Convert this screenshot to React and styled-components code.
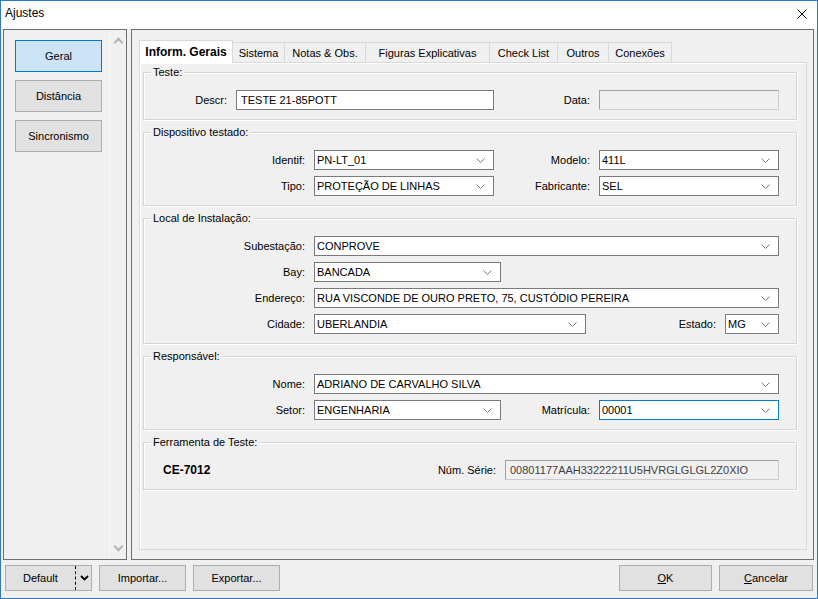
import styled, { createGlobalStyle } from 'styled-components'

const Global = createGlobalStyle`
  html, body { margin: 0; padding: 0; background: #ffffff; }
  body { font-family: "Liberation Sans", Arial, sans-serif; font-size: 11px; color: #000; }
  * { box-sizing: border-box; }
`;

export default function App(){
    return (
    <>
    <Global />
    <Janela>
        <BarraTitulo>
            <Titulo>Ajustes</Titulo>
            <Fechar>
                <svg width="10" height="10" viewBox="0 0 10 10">
                    <path d="M0.5 0.5 L9.5 9.5 M9.5 0.5 L0.5 9.5" stroke="#000" strokeWidth="1" />
                </svg>
            </Fechar>
        </BarraTitulo>
        <Corpo>
            <Conteudo>
                <PainelEsquerdo>
                    <ListaBotoes>
                        <BotaoLateral $ativo>Geral</BotaoLateral>
                        <BotaoLateral>Distância</BotaoLateral>
                        <BotaoLateral>Sincronismo</BotaoLateral>
                    </ListaBotoes>
                    <Rolagem>
                        <Seta $cima />
                        <Seta />
                    </Rolagem>
                </PainelEsquerdo>
                <PainelDireito>
                    <Abas>
                        <Aba $ativa $largura={94}>Inform. Gerais</Aba>
                        <Aba $largura={53}>Sistema</Aba>
                        <Aba $largura={82}>Notas &amp; Obs.</Aba>
                        <Aba $largura={125}>Figuras Explicativas</Aba>
                        <Aba $largura={69}>Check List</Aba>
                        <Aba $largura={52}>Outros</Aba>
                        <Aba $largura={64}>Conexões</Aba>
                    </Abas>
                    <Pagina>
                        <Grupo>
                            <Legenda>Teste:</Legenda>
                            <Linha>
                                <Rotulo $largura={92}>Descr:</Rotulo>
                                <Campo $largura={258}>TESTE 21-85POTT</Campo>
                                <Rotulo $largura={105}>Data:</Rotulo>
                                <Campo $largura={180} $desabilitado></Campo>
                            </Linha>
                        </Grupo>
                        <Grupo>
                            <Legenda>Dispositivo testado:</Legenda>
                            <Linha>
                                <Rotulo $largura={170}>Identif:</Rotulo>
                                <Combo largura={180} valor="PN-LT_01" />
                                <Rotulo $largura={105}>Modelo:</Rotulo>
                                <Combo largura={180} valor="411L" />
                            </Linha>
                            <Linha>
                                <Rotulo $largura={170}>Tipo:</Rotulo>
                                <Combo largura={180} valor="PROTEÇÃO DE LINHAS" />
                                <Rotulo $largura={105}>Fabricante:</Rotulo>
                                <Combo largura={180} valor="SEL" />
                            </Linha>
                        </Grupo>
                        <Grupo>
                            <Legenda>Local de Instalação:</Legenda>
                            <Linha>
                                <Rotulo $largura={170}>Subestação:</Rotulo>
                                <Combo largura={465} valor="CONPROVE" />
                            </Linha>
                            <Linha>
                                <Rotulo $largura={170}>Bay:</Rotulo>
                                <Combo largura={187} valor="BANCADA" />
                            </Linha>
                            <Linha>
                                <Rotulo $largura={170}>Endereço:</Rotulo>
                                <Combo largura={465} valor="RUA VISCONDE DE OURO PRETO, 75, CUSTÓDIO PEREIRA" />
                            </Linha>
                            <Linha>
                                <Rotulo $largura={170}>Cidade:</Rotulo>
                                <Combo largura={272} valor="UBERLANDIA" />
                                <Rotulo $largura={139}>Estado:</Rotulo>
                                <Combo largura={54} valor="MG" />
                            </Linha>
                        </Grupo>
                        <Grupo>
                            <Legenda>Responsável:</Legenda>
                            <Linha>
                                <Rotulo $largura={170}>Nome:</Rotulo>
                                <Combo largura={465} valor="ADRIANO DE CARVALHO SILVA" />
                            </Linha>
                            <Linha>
                                <Rotulo $largura={170}>Setor:</Rotulo>
                                <Combo largura={187} valor="ENGENHARIA" />
                                <Rotulo $largura={98}>Matrícula:</Rotulo>
                                <Combo largura={180} valor="00001" foco />
                            </Linha>
                        </Grupo>
                        <Grupo>
                            <Legenda>Ferramenta de Teste:</Legenda>
                            <Linha>
                                <Modelo>CE-7012</Modelo>
                                <Rotulo $largura={122}>Núm. Série:</Rotulo>
                                <Campo $largura={274} $desabilitado>00801177AAH33222211U5HVRGLGLGL2Z0XIO</Campo>
                            </Linha>
                        </Grupo>
                    </Pagina>
                </PainelDireito>
            </Conteudo>
            <Rodape>
                <Grupinho>
                    <Dividido>
                        <span>Default</span>
                        <Divisor />
                        <svg width="9" height="6" viewBox="0 0 9 6">
                            <path d="M1 1 L4.5 4.5 L8 1" stroke="#000" strokeWidth="1.8" fill="none" />
                        </svg>
                    </Dividido>
                    <Botao>Importar...</Botao>
                    <Botao>Exportar...</Botao>
                </Grupinho>
                <Grupinho>
                    <Botao $largura={93}><u>O</u>K</Botao>
                    <Botao $largura={94}><u>C</u>ancelar</Botao>
                </Grupinho>
            </Rodape>
        </Corpo>
    </Janela>
    </>
    )
}

function Combo({ largura, valor, foco }){
    return (
        <CaixaCombo $largura={largura} $foco={foco}>
            <span>{valor}</span>
            <svg width="9" height="5" viewBox="0 0 9 5">
                <path d="M0.5 0.5 L4.5 4.5 L8.5 0.5" stroke="#7a7a7a" strokeWidth="1" fill="none" />
            </svg>
        </CaixaCombo>
    )
}

const Janela = styled.div`
    width: 818px;
    height: 599px;
    border: 1px solid #2a7ad0;
    display: flex;
    flex-direction: column;
    background: #f0f0f0;
`;

const BarraTitulo = styled.div`
    height: 28px;
    background: #ffffff;
    display: flex;
    align-items: center;
    justify-content: space-between;
    padding: 0 10px 4px 4px;
`;

const Titulo = styled.div`
    font-size: 12px;
`;

const Fechar = styled.div`
    display: flex;
    padding-top: 2px;
`;

const Corpo = styled.div`
    flex: 1;
    display: flex;
    flex-direction: column;
`;

const Conteudo = styled.div`
    display: flex;
    gap: 4px;
    padding-left: 2px;
    height: 531px;
`;

const PainelEsquerdo = styled.div`
    width: 124px;
    border: 1px solid #6e6e6e;
    display: flex;
`;

const ListaBotoes = styled.div`
    flex: 1;
    display: flex;
    flex-direction: column;
    gap: 8px;
    padding: 10px 0 0 11px;
`;

const BotaoLateral = styled.div`
    width: 87px;
    height: 32px;
    display: flex;
    align-items: center;
    justify-content: center;
    font-size: 11px;
    background: ${p => p.$ativo ? '#cce4f7' : '#e1e1e1'};
    border: 1px solid ${p => p.$ativo ? '#0078d7' : '#adadad'};
`;

const Rolagem = styled.div`
    width: 17px;
    display: flex;
    flex-direction: column;
    justify-content: space-between;
    align-items: center;
    padding: 7px 0 7px;
    border-left: 1px solid #f7f7f7;
`;

const Seta = styled.div`
    width: 7px;
    height: 7px;
    border-left: 2px solid #b4b4b4;
    border-top: 2px solid #b4b4b4;
    transform: ${p => p.$cima ? 'translateY(2px) rotate(45deg)' : 'translateY(-2px) rotate(225deg)'};
`;

const PainelDireito = styled.div`
    width: 683px;
    border: 1px solid #6e6e6e;
    padding: 10px 6px 9px 7px;
    display: flex;
    flex-direction: column;
`;

const Abas = styled.div`
    display: flex;
    align-items: flex-end;
    height: 22px;
    position: relative;
    z-index: 1;
`;

const Aba = styled.div`
    width: ${p => p.$largura}px;
    height: ${p => p.$ativa ? 23 : 20}px;
    margin-bottom: ${p => p.$ativa ? -1 : 0}px;
    margin-left: -1px;
    display: flex;
    align-items: center;
    justify-content: center;
    padding-top: ${p => p.$ativa ? 0 : 1}px;
    border: 1px solid #d9d9d9;
    border-bottom: none;
    background: ${p => p.$ativa ? '#ffffff' : '#f0f0f0'};
    font-size: ${p => p.$ativa ? 12 : 11}px;
    font-weight: ${p => p.$ativa ? 700 : 400};
    &:first-child { margin-left: 0; }
`;

const Pagina = styled.div`
    flex: 1;
    border: 1px solid #d9d9d9;
    box-shadow: inset 1px 1px 0 #ffffff;
    padding: 9px 9px 0 3px;
    display: flex;
    flex-direction: column;
    gap: 12px;
`;

const Grupo = styled.div`
    position: relative;
    border: 1px solid #d5d5d5;
    box-shadow: inset 1px 1px 0 #ffffff, 1px 1px 0 #ffffff;
    padding: 17px 0 9px 0;
    display: flex;
    flex-direction: column;
    gap: 6px;
`;

const Legenda = styled.div`
    position: absolute;
    top: -7px;
    left: 7px;
    padding: 0 2px;
    line-height: 13px;
    background: #f0f0f0;
`;

const Linha = styled.div`
    display: flex;
    align-items: center;
    height: 20px;
`;

const Rotulo = styled.div`
    width: ${p => p.$largura}px;
    text-align: right;
    padding-right: 9px;
    white-space: nowrap;
`;

const Campo = styled.div`
    width: ${p => p.$largura}px;
    height: 20px;
    display: flex;
    align-items: center;
    padding-left: 4px;
    white-space: nowrap;
    background: ${p => p.$desabilitado ? '#f0f0f0' : '#ffffff'};
    border: 1px solid ${p => p.$desabilitado ? '#cccccc' : '#7a7a7a'};
    border-top-color: ${p => p.$desabilitado ? '#a0a0a0' : '#7a7a7a'};
    border-left-color: ${p => p.$desabilitado ? '#a0a0a0' : '#7a7a7a'};
    color: ${p => p.$desabilitado ? '#404040' : '#000'};
`;

const CaixaCombo = styled.div`
    width: ${p => p.$largura}px;
    height: 20px;
    display: flex;
    align-items: center;
    justify-content: space-between;
    padding: 0 8px 0 2px;
    white-space: nowrap;
    background: #ffffff;
    border: 1px solid ${p => p.$foco ? '#0078d7' : '#7a7a7a'};
`;

const Modelo = styled.div`
    width: 220px;
    margin-left: 19px;
    font-size: 12px;
    font-weight: 700;
`;

const Rodape = styled.div`
    display: flex;
    justify-content: space-between;
    padding: 5px 4px 0 4px;
`;

const Grupinho = styled.div`
    display: flex;
    gap: 7px;
`;

const Botao = styled.div`
    width: ${p => p.$largura || 87}px;
    height: 26px;
    display: flex;
    align-items: center;
    justify-content: center;
    background: #e1e1e1;
    border: 1px solid #adadad;
`;

const Dividido = styled(Botao)`
    justify-content: flex-start;
    padding-left: 17px;
    gap: 0;
    & > span { width: 52px; }
    & > svg { margin-left: 4px; }
`;

const Divisor = styled.div`
    width: 1px;
    height: 24px;
    border-left: 1px dashed #000;
`;
